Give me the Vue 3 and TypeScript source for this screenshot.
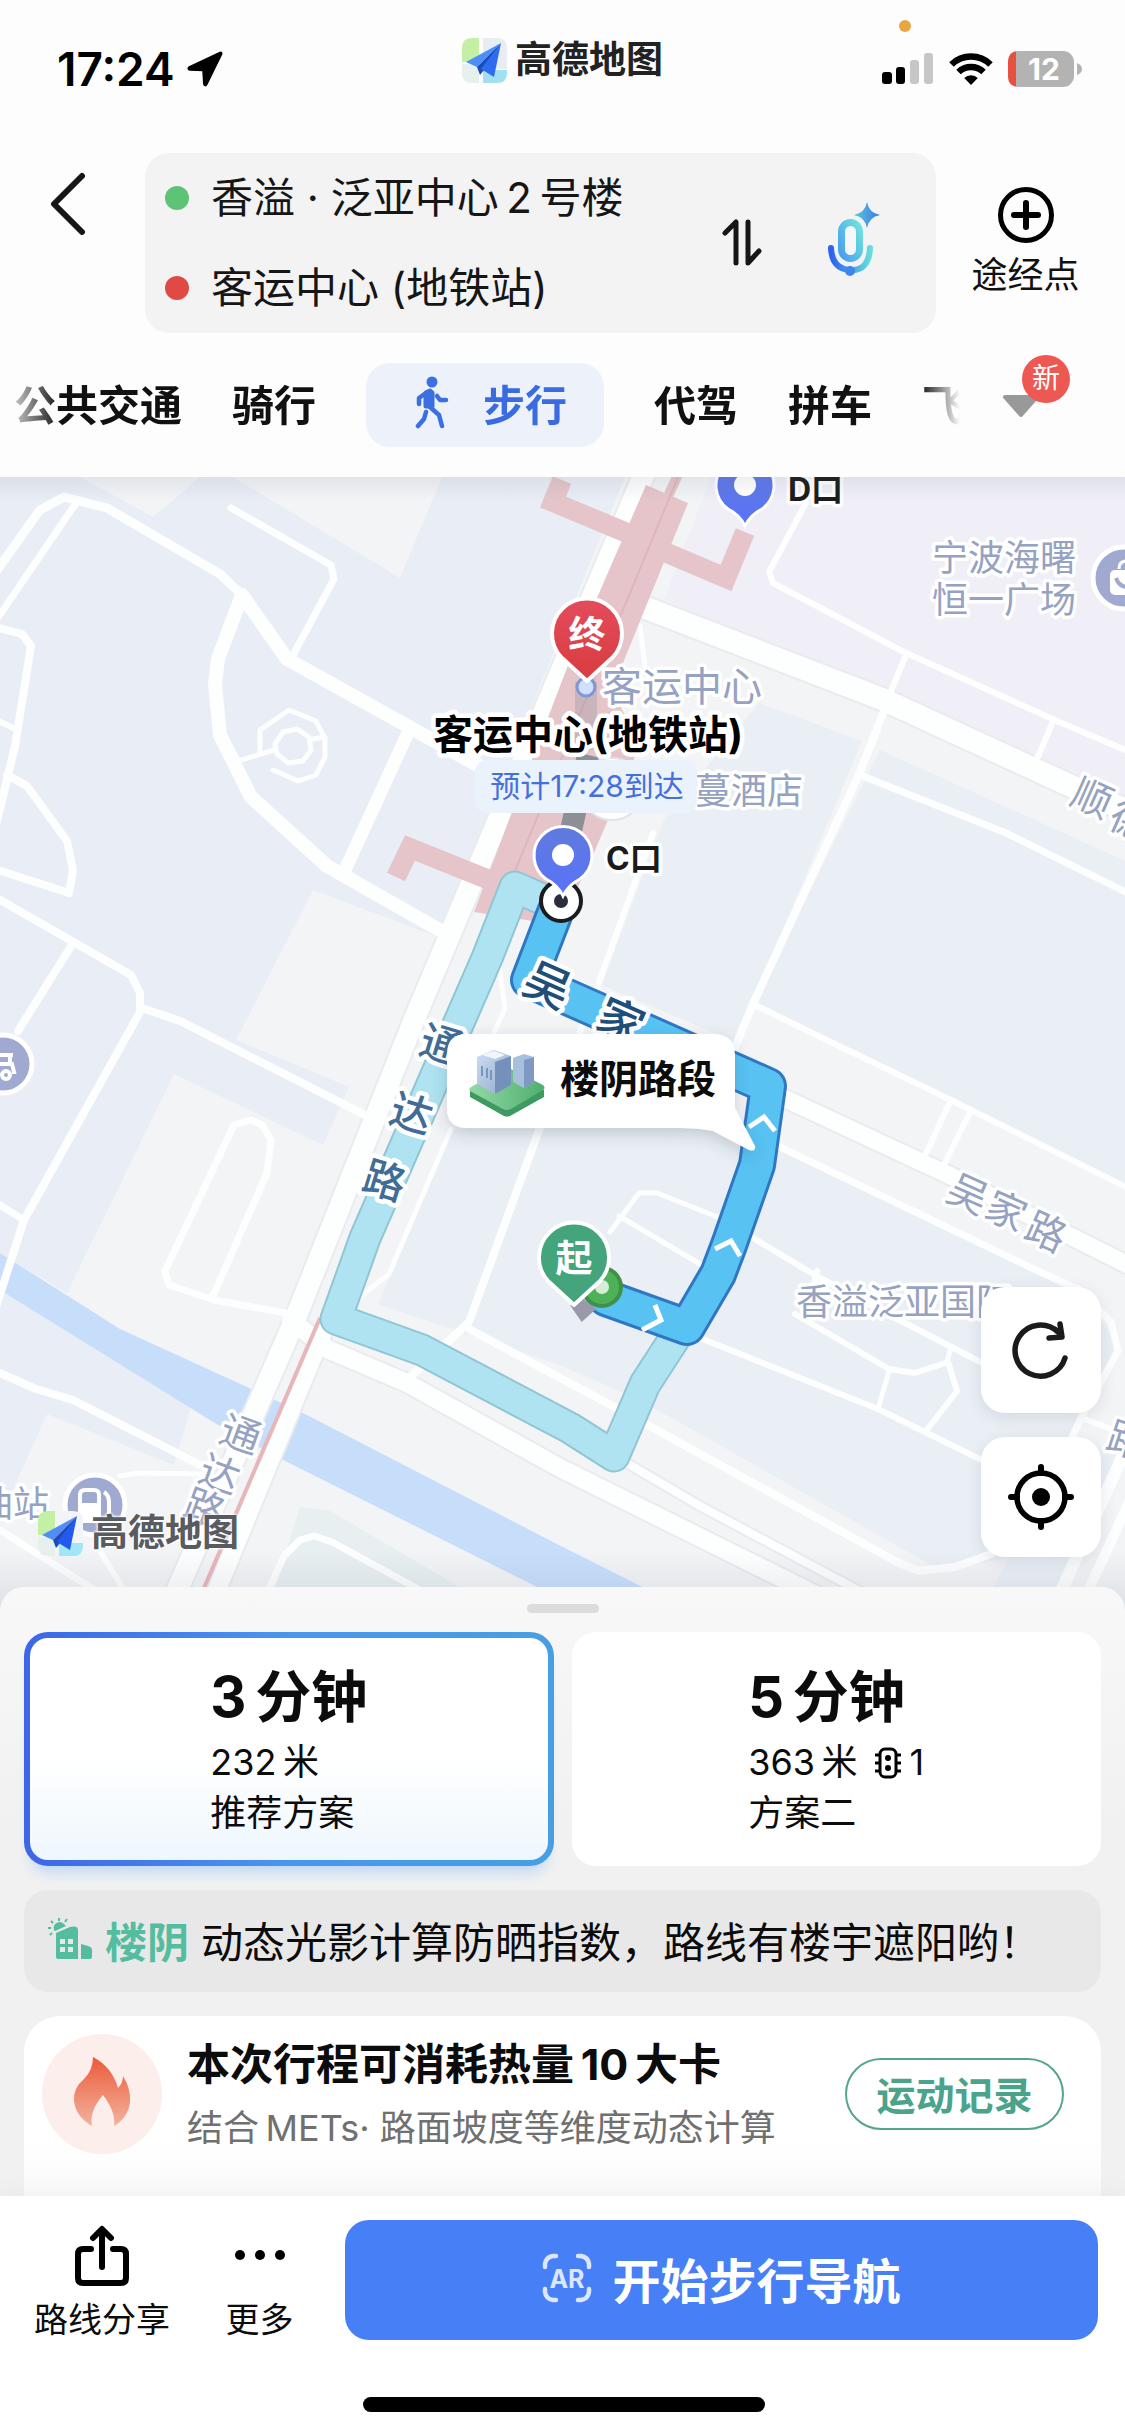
<script setup lang="ts">
import { ref } from 'vue'

interface Glyph { ch: string; x: number; y: number }
interface RoadLabel { id: string; glyphs: Glyph[]; angle: number; size: number; tone: string }
interface Road { w: number; pts: string }
interface Plan { id: string; minutes: number; metres: number; lights: number; name: string }

// Thin space between Chinese characters and digits.
const THIN = '\u2009'

const origin = ref(`香溢 · 泛亚中心${THIN}2${THIN}号楼`)
const destination = ref('客运中心 (地铁站)')
const activePlan = ref('a')

const plans: Plan[] = [
  { id: 'a', minutes: 3, metres: 232, lights: 0, name: '推荐方案' },
  { id: 'b', minutes: 5, metres: 363, lights: 1, name: '方案二' },
]

// Text that follows a road: each glyph is centred on its own point and tilted with the road.
function along(id: string, text: string, centres: [number, number][], angle: number, size: number, tone: string): RoadLabel {
  const a = (angle * Math.PI) / 180
  const half = size / 2
  const rise = size * 0.38
  const glyphs = centres.map(([cx, cy], i) => ({
    ch: text[i],
    x: Math.round(cx - (Math.cos(a) * half + Math.sin(a) * rise)),
    y: Math.round(cy - (Math.sin(a) * half - Math.cos(a) * rise)),
  }))
  return { id, glyphs, angle, size, tone }
}

const roadLabels: RoadLabel[] = [
  along('shunde', '顺德', [[1092, 797], [1130, 820]], 24, 40, 'muted'),
  along('wujia-east', '吴家路', [[968, 1193], [1006, 1210], [1046, 1231]], 24, 40, 'muted'),
  along('tongda-south', '通达路', [[241, 1434], [220, 1474], [205, 1508]], 20, 40, 'muted'),
  along('east-edge', '路', [[1128, 1440]], 18, 40, 'muted'),
]

const routeLabels: RoadLabel[] = [
  along('tongda', '通达路', [[442, 1044], [412, 1113], [385, 1180]], 17, 42, 'steel'),
  along('wujia', '吴家', [[548, 984], [621, 1020]], 24, 46, 'navy'),
]

const roads: Road[] = [
  { w: 9, pts: '-5,573 40,510 64,497 107,508 220,574 242,595' },
  { w: 7, pts: '-5,622 76,503' },
  { w: 7, pts: '231,508 331,565 334,579 293,655' },
  { w: 14, pts: '242,595 218,659 215,684 220,735 251,797 327,866 443,932' },
  { w: 14, pts: '242,595 287,659 411,728 490,772' },
  { w: 13, pts: '407,735 345,870' },
  { w: 5, pts: '238,761 274,750' },
  { w: 5, pts: '313,739 325,737' },
  { w: 5, pts: '260,752 260,730 289,710 316,721 325,739 325,757 316,775 298,781 273,770' },
  { w: 5, pts: '275,744 283,732 297,729 309,737 311,750 303,761 288,763 277,754 275,744' },
  { w: 8, pts: '-5,627 22,634 31,646 15,746 -5,830' },
  { w: 6, pts: '-5,719 13,728' },
  { w: 8, pts: '7,775 27,786 67,841 73,870 69,893 -5,869' },
  { w: 8, pts: '-5,897 131,975 140,993 140,1012 24,1220 -5,1310' },
  { w: 8, pts: '73,943 18,1031' },
  { w: 8, pts: '142,1008 180,1021 367,1116' },
  { w: 7, pts: '-5,1202 24,1220' },
  { w: 7, pts: '213,1296 267,1173 271,1140 262,1125 251,1120 234,1125 165,1271 169,1285 214,1300 291,1314' },
  { w: 8, pts: '-5,1371 36,1389 73,1400 204,1467' },
  { w: 5, pts: '120,1476 138,1473 204,1474' },
  { w: 7, pts: '-5,1527 110,1600' },
  { w: 6, pts: '95,1543 130,1600' },
  { w: 8, pts: '469,1329 620,1410 897,1562 918,1571 955,1567 991,1554' },
  { w: 8, pts: '407,1380 469,1322 538,1133 560,1080' },
  { w: 5, pts: '451,1129 389,1274 356,1300' },
  { w: 5, pts: '498,957 505,1008 491,1040' },
  { w: 6, pts: '700,1338 878,1409 990,1464' },
  { w: 6, pts: '750,1236 813,1274 880,1310 990,1367' },
  { w: 6, pts: '795,1314 889,1369 915,1373 948,1362 957,1391 926,1431' },
  { w: 5, pts: '889,1371 878,1409' },
  { w: 5, pts: '951,1347 947,1362' },
  { w: 5, pts: '610,1232 639,1193 657,1193 720,1218' },
  { w: 5, pts: '619,1216 700,1264' },
  { w: 6, pts: '817,1271 806,1320' },
  { w: 7, pts: '776,1145 1038,1271 1078,1289 1111,1322 1118,1351 1082,1416 1066,1450' },
  { w: 6, pts: '1082,1418 1130,1436' },
  { w: 6, pts: '753,1004 806,1030 951,1100 1130,1189' },
  { w: 6, pts: '951,1100 922,1162' },
  { w: 6, pts: '969,1114 940,1173' },
  { w: 8, pts: '886,706 860,772 753,1004 733,1052' },
  { w: 7, pts: '860,775 1006,833 1130,894' },
  { w: 6, pts: '806,503 769,572 773,583 904,652 1057,721 1130,752' },
  { w: 6, pts: '906,655 886,703' },
  { w: 6, pts: '1053,721 1035,764' },
  { w: 5, pts: '640,626 646,674' },
  { w: 6, pts: '653,833 595,993 577,1040' },
  { w: 7, pts: '264,1600 284,1556 300,1540 314,1536 332,1542 420,1590' },
  { w: 12, pts: '1130,1440 1057,1600' },
  { w: 10, pts: '1130,1500 1084,1600' },
]

const mainRoads: Road[] = [
  { w: 21, pts: '650,460 414,1020 294,1322 172,1602' },
  { w: 18, pts: '324,1329 212,1602' },
  { w: 18, pts: '291,1320 327,1349 407,1383 560,1468 830,1602' },
  { w: 8, pts: '625,1462 700,1506 880,1602' },
  { w: 22, pts: '646,608 882,699 1071,786 1130,812' },
  { w: 17, pts: '740,1076 773,1093 951,1176 1130,1266' },
]
</script>

<template>
  <div class="app">
    <header class="top">
      <div class="status">
        <div class="status-left">
          <span class="clock">17:24</span>
          <svg width="36" height="36" viewBox="0 0 36 36" aria-hidden="true"><path d="M33 1.500 2.200 16C.6 16.800 1 18.900 2.800 19L16 19.600 16.800 33c.1 1.900 2.200 2.200 3 .5L34.600 3.200C35.200 1.900 34.300 1 33 1.500Z" fill="#000" stroke="#000" stroke-width="1.500" stroke-linejoin="round" /></svg>
        </div>
        <div class="brand">
          <svg class="brand-icon" viewBox="0 0 45 45" aria-hidden="true">
            <path d="M10 0h7v24H0V10Q0 0 10 0Z" fill="#c3f0a4" /><path d="M21 0h14q10 0 10 10v21H21Z" fill="#e8edf2" /><path d="M0 26h17v19H10Q0 45 0 35Z" fill="#e6f1ee" /><path d="M21 32h24v3q0 10-10 10H21Z" fill="#a2e0f1" />
            <path d="M39 5 4 24l11 5Z" fill="#4f8df8" /><path d="M39 5 15 29l3 8 4-5Z" fill="#1c4bb8" /><path d="M39 5 19 31l13 8Z" fill="#2f6df0" />
          </svg>
          <span class="brand-name">高德地图</span>
        </div>
        <div class="status-right">
          <i class="mic-dot"></i>
          <svg width="52" height="34" viewBox="0 0 52 34" aria-hidden="true"><rect y="20" width="10" height="12" rx="3" /><rect x="14" y="15" width="9" height="17" rx="3" /><rect x="28" y="8" width="9" height="24" rx="3" fill="#c6c6c6" /><rect x="42" y="1" width="9" height="31" rx="3" fill="#c6c6c6" /></svg>
          <svg width="46" height="34" viewBox="0 0 46 34" aria-hidden="true"><path d="M3.500 12.500a28 28 0 0 1 39 0M10.500 20a18 18 0 0 1 25 0" fill="none" stroke="#000" stroke-width="6.500" /><path d="M23 33l-6.800-7a9.800 9.800 0 0 1 13.600 0Z" /></svg>
          <svg width="74" height="36" viewBox="0 0 74 36" aria-label="电量 12"><rect width="66" height="36" rx="11" fill="#b3b3b3" /><path d="M11 0H8V36h3Q0 36 0 25V11Q0 0 11 0Z" fill="#e8503f" /><path d="M69 12q5 2 5 6t-5 6Z" fill="#b3b3b3" /><text x="36" y="29" text-anchor="middle" class="battery">12</text></svg>
        </div>
      </div>

      <div class="route-row">
        <button class="back" aria-label="返回"><svg width="40" height="64" viewBox="0 0 40 64" aria-hidden="true"><path d="M34 4 6 32 34 60" fill="none" stroke="#161616" stroke-width="6" stroke-linecap="round" stroke-linejoin="round" /></svg></button>
        <div class="route-box">
          <div class="fields">
            <label class="field"><i class="dot green"></i><input v-model="origin" aria-label="起点" /></label>
            <label class="field"><i class="dot red"></i><input v-model="destination" aria-label="终点" /></label>
          </div>
          <button class="plain" aria-label="交换起终点"><svg width="40" height="48" viewBox="0 0 40 48" aria-hidden="true"><path d="M3 14 14 3V44M26 3V44L37 32" fill="none" stroke="#161616" stroke-width="5" stroke-linecap="round" stroke-linejoin="round" /></svg></button>
          <button class="mic" aria-label="语音输入">
            <svg width="56" height="76" viewBox="0 0 56 76" aria-hidden="true">
              <defs>
                <linearGradient id="micA" x1="0" y1="1" x2="1" y2="0"><stop offset="0" stop-color="#4a9df0" /><stop offset="1" stop-color="#6fe3dc" /></linearGradient>
                <linearGradient id="micB" x1="0" y1="0" x2="1" y2="0"><stop offset="0" stop-color="#2b62f2" /><stop offset="1" stop-color="#66dddd" /></linearGradient>
                <linearGradient id="micC" x1="0" y1="0" x2="1" y2="0"><stop offset="0" stop-color="#55c8dc" /><stop offset="1" stop-color="#3f78e6" /></linearGradient>
              </defs>
              <rect x="14.500" y="20.500" width="18" height="36" rx="9" fill="#f4f8fb" stroke="url(#micA)" stroke-width="7" />
              <path d="M4 46q1 21 19.500 22T43 46" fill="none" stroke="url(#micB)" stroke-width="6" stroke-linecap="round" /><circle cx="23" cy="69" r="5" fill="#3c86ee" />
              <path d="M40 0q2 11 13 13-11 2-13 13-2-11-13-13Q38 11 40 0Z" fill="url(#micC)" />
            </svg>
          </button>
        </div>
        <button class="via">
          <svg width="56" height="56" viewBox="0 0 56 56" aria-hidden="true"><circle cx="28" cy="28" r="25.500" fill="none" stroke="#000" stroke-width="5" /><path d="M28 16V40M16 28H40" stroke="#000" stroke-width="6" stroke-linecap="round" /></svg>
          <span>途经点</span>
        </button>
      </div>

      <nav class="modes">
        <div class="mode-list">
          <button>公共交通</button>
          <button>骑行</button>
          <button class="active">
            <svg width="34" height="54" viewBox="0 0 34 54" aria-hidden="true"><circle cx="17" cy="6" r="5.500" fill="#3b6fe2" /><path d="M11 17 15 15 17 17 17 30 11 30Z" fill="#3b6fe2" stroke="#3b6fe2" stroke-width="5" stroke-linejoin="round" /><path d="M11 17 4 22V28M22 20 25 24H31M15 31 24 39 27 50M11 36 9 43 3 50" fill="none" stroke="#3b6fe2" stroke-width="4.500" stroke-linecap="round" stroke-linejoin="round" /></svg>
            <span>步行</span>
          </button>
          <button>代驾</button>
          <button>拼车</button>
          <button>飞</button>
        </div>
        <button class="more-modes" aria-label="更多出行方式">
          <svg width="40" height="24" viewBox="0 0 40 24" aria-hidden="true"><path d="M4 2H36L20 20Z" fill="#999" stroke="#999" stroke-width="4" stroke-linejoin="round" /></svg>
          <span class="badge">新</span>
        </button>
      </nav>
    </header>

    <main class="map">
      <svg class="canvas" viewBox="0 477 1125 1134" preserveAspectRatio="xMidYMin slice" role="img" aria-label="步行路线地图">
        <defs>
          <linearGradient id="redPin" x1="0" y1="0" x2="0" y2="1"><stop offset="0" stop-color="#e34c5c" /><stop offset="1" stop-color="#d93c40" /></linearGradient>
          <linearGradient id="bluePin" x1="0" y1="0" x2="0" y2="1"><stop offset="0" stop-color="#5f7bdc" /><stop offset="1" stop-color="#5a72fa" /></linearGradient>
          <linearGradient id="tower" x1="0" y1="0" x2="1" y2="1"><stop offset="0" stop-color="#cfdef2" /><stop offset="1" stop-color="#8fa9cd" /></linearGradient>
          <linearGradient id="lawn" x1="0" y1="0" x2="1" y2="0"><stop offset="0" stop-color="#93d9a6" /><stop offset="1" stop-color="#4fae70" /></linearGradient>
          <filter id="soft" x="-20%" y="-20%" width="140%" height="160%"><feDropShadow dx="0" dy="6" stdDeviation="8" flood-color="#34425a" flood-opacity=".22" /></filter>
          <g id="exitPin"><path d="M0 41Q-5 30-17 24A29 29 0 1 1 17 24Q5 30 0 41Z" fill="url(#bluePin)" stroke="#fff" stroke-width="3" /><circle r="11" fill="#fff" /></g>
        </defs>

        <rect y="477" width="1125" height="1134" fill="#f2f4f6" />
        <path d="M0 477H625L438 937 313 890 236 1040 349 1087 323 1145 174 1074 67 1293 0 1253Z" fill="#e9edf5" />
        <path d="M0 1275 196 1390 174 1465 47 1414 0 1518Z" fill="#e9edf5" />
        <path d="M80 477H200L153 517ZM233 477H442L400 578Z" fill="#f2f4f6" />
        <path d="M711 477H1125V797L886 692 664 600Z" fill="#f0eff8" />
        <path d="M759 703 862 741 753 1001 735 1042 602 985 664 819Z" fill="#e9eff4" />
        <path d="M880 750 1125 861V1184L951 1100 755 1001Z" fill="#e9eff4" />
        <path d="M454 1129H540L735 1115 782 1144 1075 1285 1118 1345 1009 1558 940 1570 640 1400 560 1365 378 1304Z" fill="#e9eff4" />
        <path d="M300 1507 330 1511 500 1611H268Z" fill="#e7eff1" />
        <path d="M1009 1558 1050 1470 1125 1440 1060 1611H980Z" fill="#ebf0f6" />
        <path d="M0 1253 120 1329 247 1387 305 1414 555 1543 690 1611H585L287 1462 218 1425 0 1290Z" fill="#c7defb" />

        <g fill="none" stroke="#e9ebef" stroke-linejoin="round">
          <polyline v-for="r in mainRoads" :key="r.pts" :points="r.pts" :stroke-width="r.w + 4" />
        </g>
        <g fill="none" stroke="#fdfefe" stroke-linejoin="round" stroke-linecap="round">
          <polyline v-for="r in roads" :key="r.pts" :points="r.pts" :stroke-width="r.w" />
          <polyline v-for="r in mainRoads" :key="r.pts" :points="r.pts" :stroke-width="r.w" />
        </g>
        <path d="M320 1318 198 1602" stroke="#e7b6b8" stroke-width="4" />

        <path d="M646 485 688 503 612 690 640 745 593 855 560 925 474 912 534 754 570 660Z" fill="#e5c5ca" />
        <path d="M562 480 553 502 632 535M660 550 726 578 745 532M396 877 410 848 492 881" fill="none" stroke="#e5c5ca" stroke-width="20" />
        <path d="M680 470 655 525" stroke="#e5c5ca" stroke-width="10" />
        <path d="M678 477 505 895" stroke="#dfb5bb" stroke-width="2" />
        <path d="M586 682V750" stroke="#8b8e9a" stroke-opacity=".3" stroke-width="22" />
        <path d="M588 755 570 835" stroke="#8c9096" stroke-width="22" />
        <circle cx="612" cy="789" r="31" fill="#fff" stroke="#e2e4ea" stroke-width="2" />

        <g fill="none" stroke-linejoin="round" stroke-linecap="round">
          <path d="M544 900 515 887 487 958 365 1238 336 1319 422 1350 570 1428 614 1456 645 1384 680 1330" stroke="#91c5d4" stroke-width="33" />
          <path d="M544 900 515 887 487 958 365 1238 336 1319 422 1350 570 1428 614 1456 645 1384 680 1330" stroke="#afe3f2" stroke-width="29" />
          <path d="M556 910 529 980 768 1086 757 1165 729 1245 718 1274 687 1327 606 1298" stroke="#2f77c3" stroke-width="38" />
          <path d="M556 910 529 980 768 1086 757 1165 729 1245 718 1274 687 1327 606 1298" stroke="#58c3f3" stroke-width="32" />
          <path d="M749 1127 764 1117 775 1131M715 1249 731 1241 740 1256M655 1305 661 1320 642 1330" stroke="#fff" stroke-width="5" stroke-linecap="butt" stroke-linejoin="miter" />
        </g>

        <circle cx="602" cy="1287" r="19" fill="#4db157" stroke="#3f9149" stroke-width="4" /><circle cx="602" cy="1287" r="7" fill="#d5ecd6" />
        <path d="M573 1306 582 1300 593 1309 582 1319Z" fill="#989aa9" stroke="#989aa9" stroke-width="4" />
        <circle cx="561" cy="901" r="20" fill="#fff" stroke="#1c1c1e" stroke-width="4" /><circle cx="561" cy="901" r="7" fill="#2c2d3a" />
        <circle cx="586" cy="687" r="9" fill="#cfe0fb" stroke="#8196d6" stroke-width="3" />

        <g stroke="#fff" stroke-width="5" fill="#a0aad0">
          <circle cx="3" cy="1064" r="29" /><circle cx="95" cy="1505" r="30" /><circle cx="1124" cy="578" r="31" />
        </g>
        <path d="M-6 1055H13M10 1055V1064M-6 1064H12L14 1072H12M0 1073H-6" fill="none" stroke="#fff" stroke-width="4" /><circle cx="6" cy="1075" r="4" fill="none" stroke="#fff" stroke-width="4" />
        <path d="M80 1518V1495q0-5 5-5h9q5 0 5 5v23ZM104 1492q5 3 5 10v16" fill="none" stroke="#fff" stroke-width="4" /><rect x="80" y="1503" width="19" height="20" fill="#fff" />
        <rect x="1110" y="570" width="28" height="25" rx="5" fill="#fff" /><path d="M1116 578q3 9 12 9" fill="none" stroke="#a0aad0" stroke-width="4" />
        <path d="M1119 569q0-8 8-8" fill="none" stroke="#fff" stroke-width="3" />

        <g class="halo muted" font-size="36">
          <text x="602" y="701" font-size="40">客运中心</text>
          <text x="695" y="804">蔓酒店</text>
          <text x="932" y="571">宁波海曙</text>
          <text x="932" y="613">恒一广场</text>
          <text x="796" y="1315">香溢泛亚国际</text>
          <text x="49" y="1517" text-anchor="end">加油站</text>
        </g>
        <text v-for="l in roadLabels" :key="l.id" class="halo" :class="l.tone" :font-size="l.size" :x="l.glyphs.map(g => g.x).join(' ')" :y="l.glyphs.map(g => g.y).join(' ')" :rotate="l.angle">{{ l.glyphs.map(g => g.ch).join('') }}</text>
        <text v-for="l in routeLabels" :key="l.id" class="halo thick" :class="l.tone" :font-size="l.size" :x="l.glyphs.map(g => g.x).join(' ')" :y="l.glyphs.map(g => g.y).join(' ')" :rotate="l.angle">{{ l.glyphs.map(g => g.ch).join('') }}</text>

        <use href="#exitPin" x="745" y="485" /><use href="#exitPin" x="563" y="855" />
        <g class="halo strong" font-size="32"><text x="788" y="501">D口</text><text x="606" y="870">C口</text></g>
        <text class="halo strong thick place" x="588" y="749" text-anchor="middle">客运中心(地铁站)</text>
        <rect x="475" y="760" width="222" height="53" rx="12" fill="#eaf2fc" />
        <text x="587" y="797" text-anchor="middle" class="eta">预计17:28到达</text>

        <path d="M587 681 561 657A35 35 0 1 1 613 657Z" fill="url(#redPin)" stroke="#fff" stroke-width="4" stroke-linejoin="round" />
        <text x="587" y="648" text-anchor="middle" class="pin-text">终</text>
        <path d="M574 1305 548 1281A35 35 0 1 1 600 1281Z" fill="#44a47c" stroke="#fff" stroke-width="4" stroke-linejoin="round" />
        <text x="574" y="1272" text-anchor="middle" class="pin-text">起</text>

        <g filter="url(#soft)">
          <path d="M467 1034H713Q735 1034 735 1056V1108L755 1146Q756 1152 749 1150L713 1131Q700 1128 680 1128H467Q447 1128 447 1108V1054Q447 1034 467 1034Z" fill="#fff" />
        </g>
        <path d="M470 1091v6l34 19q3 1 6 0l34-19v-7L507 1078Z" fill="#3f9a62" />
        <path d="M471 1087 507 1067 543 1085q3 3 0 5l-32 19q-4 2-8 0l-33-18q-2-2 1-4Z" fill="url(#lawn)" />
        <path d="M513 1058 524 1054 534 1057V1083L524 1088 513 1082Z" fill="#a9c0dd" /><path d="M524 1060 534 1057V1083L524 1088Z" fill="#7e9ac2" />
        <path d="M477 1057 494 1050 511 1056V1085L495 1094 477 1084Z" fill="url(#tower)" /><path d="M495 1062 511 1056V1085L495 1094Z" fill="#7590bb" /><path d="M482 1055 494 1051 505 1055 495 1059Z" fill="#f1f6fc" /><path d="M482 1066v10M487 1068v10M491 1070v10" stroke="#7c95bb" stroke-width="2" />
        <text x="560" y="1093" class="callout">楼阴路段</text>
      </svg>

      <div class="watermark">
        <svg class="brand-icon" viewBox="0 0 45 45" aria-hidden="true">
          <path d="M10 0h7v24H0V10Q0 0 10 0Z" fill="#c3f0a4" /><path d="M21 0h14q10 0 10 10v21H21Z" fill="#f2f5f8" /><path d="M0 26h17v19H10Q0 45 0 35Z" fill="#e6f1ee" /><path d="M21 32h24v3q0 10-10 10H21Z" fill="#a2e6fa" />
          <path d="M39 5 4 24l11 5Z" fill="#4f8df8" /><path d="M39 5 15 29l3 8 4-5Z" fill="#1c4bb8" /><path d="M39 5 19 31l13 8Z" fill="#2259ee" />
        </svg>
        <span class="brand-name">高德地图</span>
      </div>

      <div class="tools">
        <button class="tall" aria-label="刷新路线"><svg width="60" height="60" viewBox="0 0 60 60" aria-hidden="true"><path d="M54 38A25.500 25.500 0 1 1 47 12M49 4 51 17 38 18" fill="none" stroke="#1b1b1b" stroke-width="5.500" stroke-linecap="round" stroke-linejoin="round" /></svg></button>
        <button aria-label="定位"><svg width="66" height="66" viewBox="0 0 66 66" aria-hidden="true"><circle cx="33" cy="33" r="24" fill="none" stroke="#000" stroke-width="5.500" /><circle cx="33" cy="33" r="9" /><path d="M33 3V9M33 57V63M3 33H9M57 33H63" stroke="#000" stroke-width="6" stroke-linecap="round" /></svg></button>
      </div>
    </main>

    <section class="sheet">
      <div class="handle"></div>
      <div class="plans">
        <button v-for="p in plans" :key="p.id" class="plan" :class="{ chosen: p.id === activePlan }" @click="activePlan = p.id">
          <span class="plan-body">
            <strong>{{ p.minutes }}{{ THIN }}分钟</strong>
            <span class="plan-line">
              <span>{{ p.metres }}{{ THIN }}米</span>
              <span v-if="p.lights" class="lights">
                <svg width="28" height="32" viewBox="0 0 28 32" aria-hidden="true"><rect x="6" y="2" width="16" height="28" rx="5" fill="none" stroke="#000" stroke-width="3" /><path d="M5 8H1M5 16H1M5 24H1M23 8H27M23 16H27M23 24H27" stroke="#000" stroke-width="3" /><circle cx="14" cy="11" r="3" /><circle cx="14" cy="21" r="3" /></svg>
                <span>{{ p.lights }}</span>
              </span>
            </span>
            <span class="plan-line">{{ p.name }}</span>
          </span>
        </button>
      </div>

      <div class="tip">
        <svg width="44" height="44" viewBox="0 0 44 44" aria-hidden="true"><path d="M8 16 22 10q8-2 8 3V42H10Q8 42 8 40ZM33 27 40 29q4 1 4 4v7q0 2-2 2H33Z" fill="#54bd9f" /><path d="M12 22h5v5h-5ZM20 22h5v5h-5ZM12 30h5v5h-5ZM20 30h5v5h-5Z" fill="#e8e8e8" /><path d="M6 13a6 6 0 0 1 10-6l2 2L7 14Z" fill="#54bd9f" /><path d="M11 4V1M5 6 3 4M3 11H0M4 16 2 18M17 5l2-3" stroke="#54bd9f" stroke-width="2" /></svg>
        <b>楼阴</b>
        <span>动态光影计算防晒指数，路线有楼宇遮阳哟！</span>
      </div>

      <article class="calorie">
        <div class="flame">
          <svg width="60" height="70" viewBox="0 0 60 70" aria-hidden="true"><defs><linearGradient id="fire" x1="0" y1="0" x2="0" y2="1"><stop offset="0" stop-color="#ec5a3a" /><stop offset="1" stop-color="#f2b39d" /></linearGradient></defs><path d="M21 0Q40 10 46 31 51 26 51 19 59 32 58 45 56 61 42 69 44 55 31 38 17 54 20 69 4 60 2 44 1 31 12 22 21 13 21 0Z" fill="url(#fire)" /></svg>
        </div>
        <div class="calorie-text">
          <h2>本次行程可消耗热量{{ THIN }}10{{ THIN }}大卡</h2>
          <p>结合{{ THIN }}METs· 路面坡度等维度动态计算</p>
        </div>
        <button class="record">运动记录</button>
      </article>
    </section>

    <footer class="bar">
      <div class="actions">
        <button class="action">
          <svg width="56" height="62" viewBox="0 0 56 62" aria-hidden="true"><path d="M17 24H9Q4 24 4 29V53Q4 58 9 58H47Q52 58 52 53V29Q52 24 47 24H39M28 42V5M19 13 28 4 37 13" fill="none" stroke="#000" stroke-width="6" stroke-linecap="round" stroke-linejoin="round" /></svg>
          <span>路线分享</span>
        </button>
        <button class="action">
          <svg width="56" height="62" viewBox="0 0 56 62" aria-hidden="true"><circle cx="8" cy="30" r="5" /><circle cx="28" cy="30" r="5" /><circle cx="48" cy="30" r="5" /></svg>
          <span>更多</span>
        </button>
        <button class="go">
          <svg width="50" height="50" viewBox="0 0 50 50" aria-hidden="true"><path d="M3 14V11Q4 4 11 3H14M36 3H39Q46 4 47 11V14M47 36V39Q46 46 39 47H36M14 47H11Q4 46 3 39V36" fill="none" stroke="#dce7ff" stroke-width="4.500" stroke-linecap="round" /><text x="25" y="35" text-anchor="middle" class="ar">AR</text></svg>
          <span>开始步行导航</span>
        </button>
      </div>
      <div class="home"></div>
    </footer>
  </div>
</template>

<style>
body { margin: 0; background: #fff; }
</style>

<style scoped>
.app { min-height: 100vh; display: flex; flex-direction: column; overflow: hidden; background: #fdfdfd; color: #111; font-family: Inter, "Noto Sans CJK SC", sans-serif; }
* { box-sizing: border-box; }
button { border: 0; padding: 0; background: none; color: inherit; font: inherit; cursor: pointer; }
svg { display: block; flex: none; }

.status { display: grid; grid-template-columns: 1fr auto 1fr; align-items: start; height: 153px; padding: 36px 43px 0; }
.status-left { display: flex; align-items: center; gap: 12px; height: 66px; padding-left: 14px; }
.clock { font-size: 46px; font-weight: 600; color: #000; }
.brand, .watermark { display: flex; align-items: center; gap: 8px; height: 48px; }
.brand-icon { width: 45px; height: 45px; }
.brand-name { font-size: 37px; line-height: 48px; font-weight: 700; color: #222; }
.status-right { position: relative; display: flex; align-items: center; justify-content: flex-end; gap: 14px; height: 66px; }
.mic-dot { position: absolute; right: 171px; top: -16px; width: 12px; height: 12px; border-radius: 50%; background: #e9a541; }
.battery { fill: #fff; font: 700 30px Inter, sans-serif; }

.route-row { display: flex; height: 180px; }
.back { width: 145px; padding: 0 0 78px 48px; }
.route-box { flex: 1; display: flex; align-items: center; padding: 0 53px 0 20px; border-radius: 24px; background: #f3f3f3; min-width: 0; }
.fields { flex: 1; min-width: 0; }
.field { display: flex; align-items: center; gap: 22px; height: 90px; }
.dot { width: 24px; height: 24px; border-radius: 50%; flex: none; }
.dot.green { background: #5ec277; }
.dot.red { background: #e04a45; }
.field input { flex: 1; min-width: 0; border: 0; padding: 0; outline: 0; background: none; font: 400 42px/60px Inter, "Noto Sans CJK SC", sans-serif; color: #161616; }
.mic { margin: 0 0 6px 65px; }
.via { width: 189px; padding: 34px 10px 0 0; display: flex; flex-direction: column; align-items: center; gap: 6px; font-size: 36px; line-height: 52px; }

.modes { display: flex; align-items: center; height: 144px; }
.mode-list { flex: 1; min-width: 0; display: flex; align-items: center; gap: 50px; padding-left: 14px; overflow: hidden; white-space: nowrap; font-size: 42px; font-weight: 700; mask-image: linear-gradient(90deg, transparent 0, #000 60px, #000 calc(100% - 40px), transparent 100%); }
.mode-list button { flex: none; height: 84px; padding-bottom: 5px; }
.mode-list .active { display: flex; align-items: center; gap: 34px; padding: 0 37px 5px 49px; border-radius: 24px; background: #ecf1fa; color: #3b6be0; }
.more-modes { position: relative; width: 165px; display: flex; padding: 4px 0 0 41px; }
.badge { position: absolute; left: 62px; top: -36px; width: 48px; height: 48px; border-radius: 50%; background: #ee5853; color: #fff; font-size: 28px; line-height: 46px; text-align: center; }

.map { position: relative; flex: 1; min-height: 0; margin-bottom: -24px; overflow: hidden; background: #f2f4f6; }
.canvas { width: 100%; height: 1134px; font-family: Inter, "Noto Sans CJK SC", sans-serif; }
.map::before, .map::after { content: ""; position: absolute; left: 0; right: 0; top: 0; height: 24px; background: linear-gradient(rgba(90, 100, 120, .1), transparent); z-index: 1; }
.map::after { top: auto; bottom: 0; height: 60px; background: linear-gradient(transparent, rgba(90, 100, 120, .14)); }
.halo { paint-order: stroke; stroke: #fff; stroke-width: 7px; stroke-linejoin: round; font-weight: 400; }
.thick { stroke-width: 9px; font-weight: 500; }
.muted { fill: #96a2c1; }
.steel { fill: #3f6d97; }
.navy { fill: #1f4f78; }
.strong { fill: #1b1b1b; font-weight: 700; }
.place { font-size: 40px; fill: #000; }
.eta { font-size: 30px; fill: #4570dc; }
.pin-text { font-size: 37px; font-weight: 700; fill: #fff; }
.callout { font-size: 39px; font-weight: 700; fill: #0c0c0c; }
.watermark { position: absolute; left: 38px; bottom: 54px; }
.watermark .brand-name { color: #5a5b5f; text-shadow: 0 0 3px #fff, 0 0 3px #fff, 0 0 3px #fff; }
.tools { position: absolute; right: 24px; bottom: 54px; display: flex; flex-direction: column; gap: 24px; z-index: 2; }
.tools button { display: grid; place-items: center; width: 120px; height: 120px; border-radius: 24px; background: #fff; box-shadow: 0 4px 16px rgba(50, 60, 90, .12); }
.tools .tall { height: 126px; }

.sheet { position: relative; z-index: 3; padding: 17px 24px 0; border-radius: 24px 24px 0 0; background: linear-gradient(#f8f8f8, #f1f1f1 40%); }
.handle { width: 72px; height: 9px; margin: 0 auto 19px; border-radius: 5px; background: #dcdcdc; }
.plans { display: grid; grid-template-columns: 1fr 1fr; gap: 18px; }
.plan { display: flex; justify-content: center; height: 234px; padding-top: 19px; border: 6px solid #fff; border-radius: 24px; background: #fff; text-align: left; color: #0c0c0c; }
.chosen { border-color: transparent; background: linear-gradient(#fff 55%, #eef7fe) padding-box, linear-gradient(90deg, #3d66e8, #4a96ee 50%, #479fe2) border-box; box-shadow: 0 14px 14px -8px rgba(110, 175, 250, .4); }
.plan-body { display: flex; flex-direction: column; }
.plan strong { font-size: 56px; line-height: 80px; font-weight: 700; }
.plan-line { display: flex; align-items: center; gap: 16px; font-size: 36px; line-height: 51px; }
.lights { display: flex; align-items: center; gap: 8px; }
.tip { display: flex; align-items: center; height: 102px; margin-top: 24px; padding: 0 24px 4px; border-radius: 24px; background: #e8e8e8; font-size: 42px; white-space: nowrap; color: #0c0c0c; }
.tip b { margin: 0 12px 0 13px; color: #54bd9f; }
.calorie { display: flex; align-items: center; height: 180px; margin-top: 24px; padding: 0 37px 24px 18px; border-radius: 36px 36px 0 0; background: linear-gradient(#fff 70%, #fafafa); }
.flame { display: grid; place-items: center; width: 120px; height: 120px; margin: 0 25px 0 0; padding-bottom: 4px; border-radius: 50%; background: #fceeeb; }
.calorie-text { flex: 1; min-width: 0; padding-top: 4px; white-space: nowrap; }
.calorie-text h2 { margin: 0; font-size: 43px; line-height: 64px; font-weight: 700; color: #0c0c0c; }
.calorie-text p { margin: 0; font-size: 36px; line-height: 64px; color: #707070; }
.record { width: 219px; height: 72px; padding-bottom: 3px; border: 2px solid #55a48e; border-radius: 36px; color: #4ba38b; font-size: 39px; font-weight: 700; }

.bar { position: relative; z-index: 4; height: 240px; padding: 24px 27px 0 30px; background: #fff; box-shadow: 0 -4px 24px rgba(0, 0, 0, .04); }
.actions { display: flex; }
.action { display: flex; flex-direction: column; align-items: center; gap: 10px; width: 144px; height: 120px; padding-top: 5px; font-size: 34px; line-height: 46px; white-space: nowrap; color: #0c0c0c; }
.action + .action { width: 171px; }
.go { flex: 1; height: 120px; display: flex; align-items: center; justify-content: center; gap: 20px; padding-bottom: 4px; border-radius: 24px; background: #467ff6; color: #fff; font-size: 48px; font-weight: 700; }
.ar { fill: #dce7ff; font: 700 25px Inter, sans-serif; }
.home { width: 402px; height: 15px; margin: 57px auto 0; border-radius: 8px; background: #000; }
</style>
